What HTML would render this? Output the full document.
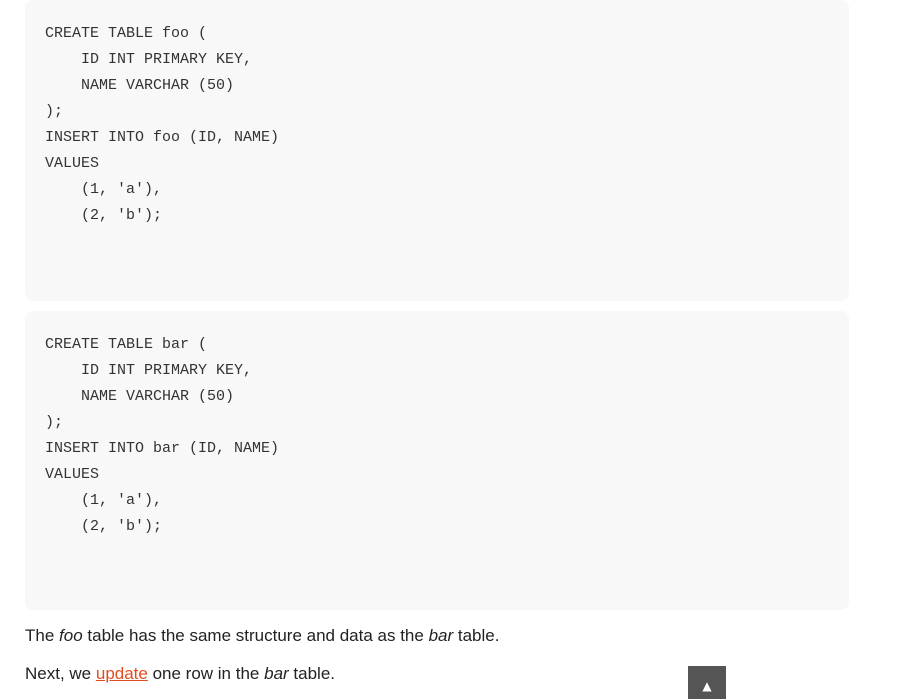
<!DOCTYPE html>
<html><head><meta charset="utf-8"><style>
html,body{margin:0;padding:0;background:#fff;width:901px;height:699px;overflow:hidden;position:relative}
.code{position:absolute;left:25px;width:824px;background:#f8f8f8;border-radius:8px;box-sizing:border-box;padding:21px 20px;font-family:"Liberation Mono",monospace;font-size:15px;line-height:26px;color:#333;white-space:pre;margin:0}
p{position:absolute;left:25px;margin:0;font-family:"Liberation Sans",sans-serif;font-size:17px;color:#222;white-space:nowrap}
a{color:#e04d1f;text-decoration:underline}
.top{position:absolute;left:688px;top:666px;width:38px;height:33px;background:#555;color:#fff;font-size:12px;text-align:center;line-height:40px;font-family:"DejaVu Sans",sans-serif}
</style></head><body>
<pre class="code" style="top:0;height:301px">CREATE TABLE foo (
    ID INT PRIMARY KEY,
    NAME VARCHAR (50)
);
INSERT INTO foo (ID, NAME)
VALUES
    (1, 'a'),
    (2, 'b');</pre>
<pre class="code" style="top:311px;height:299px">CREATE TABLE bar (
    ID INT PRIMARY KEY,
    NAME VARCHAR (50)
);
INSERT INTO bar (ID, NAME)
VALUES
    (1, 'a'),
    (2, 'b');</pre>
<p style="top:626px">The <i>foo</i> table has the same structure and data as the <i>bar</i> table.</p>
<p style="top:664px">Next, we <a>update</a> one row in the <i>bar</i> table.</p>
<div class="top">▲</div>
</body></html>
